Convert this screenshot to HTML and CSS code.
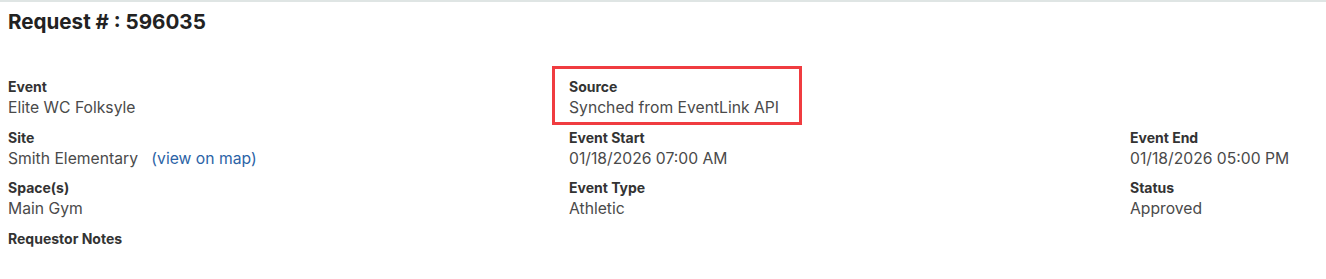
FILE: index.html
```html
<!DOCTYPE html>
<html lang="en">
<head>
    <meta charset="UTF-8">
    <meta name="viewport" content="width=device-width, initial-scale=1.0">
    <title>Request 596035</title>
    <link rel="stylesheet" href="styles.css">
</head>
<body>

    <div class="page">
        <h2 class="title">Request # : 596035</h2>

        <div class="details">
            <!-- row 1 -->
            <div class="field">
                <div class="label">Event</div>
                <div class="value">Elite WC Folksyle</div>
            </div>
            <div class="field highlight">
                <div class="label">Source</div>
                <div class="value">Synched from EventLink API</div>
            </div>
            <div class="field"></div>

            <!-- row 2 -->
            <div class="field">
                <div class="label">Site</div>
                <div class="value">Smith Elementary <a href="#" class="map-link">(view on map)</a></div>
            </div>
            <div class="field">
                <div class="label">Event Start</div>
                <div class="value">01/18/2026 07:00 AM</div>
            </div>
            <div class="field">
                <div class="label">Event End</div>
                <div class="value">01/18/2026 05:00 PM</div>
            </div>

            <!-- row 3 -->
            <div class="field">
                <div class="label">Space(s)</div>
                <div class="value">Main Gym</div>
            </div>
            <div class="field">
                <div class="label">Event Type</div>
                <div class="value">Athletic</div>
            </div>
            <div class="field">
                <div class="label">Status</div>
                <div class="value">Approved</div>
            </div>

            <!-- row 4 -->
            <div class="field">
                <div class="label">Requestor Notes</div>
            </div>
        </div>
    </div>

</body>
</html>
```

FILE: styles.css
```css
body {
    font-family: Inter, "Noto Sans", sans-serif;
    background-color: #ffffff;
    margin: 0;
    padding: 0;
    color: #444;
}
.page {
    border-top: 2px solid #dfe5e4;
    padding: 0 8px;
}
.title {
    font-size: 20.6px;
    font-weight: 700;
    color: #222;
    margin: 7px 0 42px;
    line-height: 26px;
}
.details {
    display: grid;
    grid-template-columns: 561px 561px 1fr;
}
.field {
    height: 50.5px;
}
.label {
    font-size: 14px;
    font-weight: 700;
    color: #333;
    line-height: 20px;
}
.value {
    font-size: 15.7px;
    color: #4a4a4a;
    line-height: 21px;
}
.map-link {
    color: #2b63a6;
    text-decoration: none;
    margin-left: 9px;
}
.highlight {
    position: relative;
}
.highlight::after {
    content: "";
    position: absolute;
    left: -17px;
    top: -11px;
    width: 244px;
    height: 53px;
    border: 3px solid #f03c40;
}
```
